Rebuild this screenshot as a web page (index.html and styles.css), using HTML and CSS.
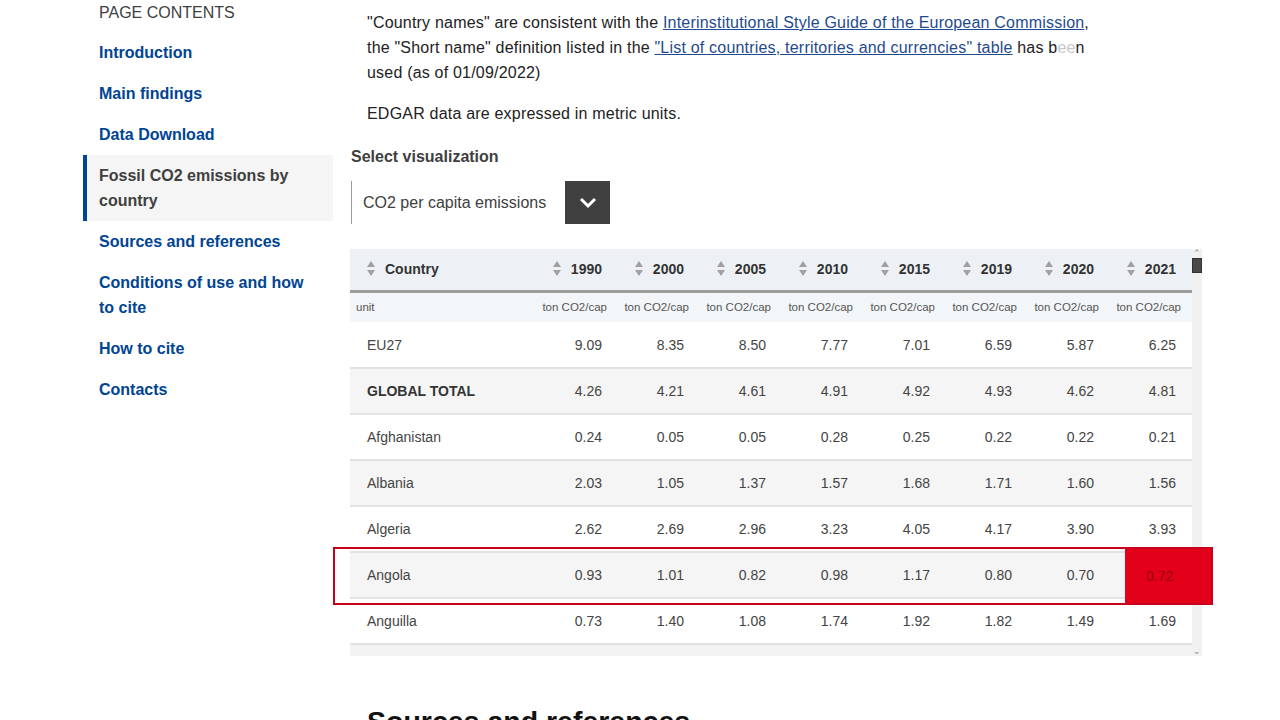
FILE: index.html
```html
<!DOCTYPE html>
<html lang="en">
<head>
    <meta charset="UTF-8">
    <meta name="viewport" content="width=device-width, initial-scale=1.0">
    <title>EDGAR - Fossil CO2 emissions by country</title>
    <link rel="stylesheet" href="styles.css">
</head>
<body>
    <div class="page">
        <nav class="sidebar">
            <div class="toc-title">PAGE CONTENTS</div>
            <ul class="toc">
                <li><a href="#">Introduction</a></li>
                <li><a href="#">Main findings</a></li>
                <li><a href="#">Data Download</a></li>
                <li class="active"><a href="#">Fossil CO2 emissions by country</a></li>
                <li><a href="#">Sources and references</a></li>
                <li><a href="#">Conditions of use and how to cite</a></li>
                <li><a href="#">How to cite</a></li>
                <li><a href="#">Contacts</a></li>
            </ul>
        </nav>

        <main class="content">
            <p class="text">"Country names" are consistent with the <a href="#">Interinstitutional Style Guide of the European Commission</a>, the "Short name" definition listed in the <a href="#">"List of countries, territories and currencies" table</a> has b<span class="faded">ee</span>n used (as of 01/09/2022)</p>
            <p class="text">EDGAR data are expressed in metric units.</p>

            <div class="select-label">Select visualization</div>
            <div class="select">
                <span class="select-value">CO2 per capita emissions</span>
                <span class="select-btn">
                    <svg width="18" height="12" viewBox="0 0 18 12"><path d="M2 2 L9 9 L16 2" fill="none" stroke="#fff" stroke-width="3"/></svg>
                </span>
            </div>

            <div class="table-wrap">
                <div class="table-area">
                    <table class="data-table">
                        <thead>
                            <tr class="head-row">
                                <th class="col-country"><span class="sort"></span>Country</th>
                                <th><span class="sort"></span>1990</th>
                                <th><span class="sort"></span>2000</th>
                                <th><span class="sort"></span>2005</th>
                                <th><span class="sort"></span>2010</th>
                                <th><span class="sort"></span>2015</th>
                                <th><span class="sort"></span>2019</th>
                                <th><span class="sort"></span>2020</th>
                                <th><span class="sort"></span>2021</th>
                            </tr>
                            <tr class="unit-row">
                                <td class="col-country">unit</td>
                                <td>ton CO2/cap</td>
                                <td>ton CO2/cap</td>
                                <td>ton CO2/cap</td>
                                <td>ton CO2/cap</td>
                                <td>ton CO2/cap</td>
                                <td>ton CO2/cap</td>
                                <td>ton CO2/cap</td>
                                <td>ton CO2/cap</td>
                            </tr>
                        </thead>
                        <tbody id="rows"></tbody>
                    </table>
                    <div class="table-foot"></div>
                    <div class="highlight">
                        <div class="highlight-cell">0.72</div>
                    </div>
                </div>
                <div class="scrollbar">
                    <span class="arrow">&#8963;</span>
                    <span class="thumb"></span>
                    <span class="spacer"></span>
                    <span class="arrow">&#8964;</span>
                </div>
            </div>

            <h2 class="section-title">Sources and references</h2>
        </main>
    </div>

    <script>
        const data = [
            ['EU27', ['9.09', '8.35', '8.50', '7.77', '7.01', '6.59', '5.87', '6.25']],
            ['GLOBAL TOTAL', ['4.26', '4.21', '4.61', '4.91', '4.92', '4.93', '4.62', '4.81']],
            ['Afghanistan', ['0.24', '0.05', '0.05', '0.28', '0.25', '0.22', '0.22', '0.21']],
            ['Albania', ['2.03', '1.05', '1.37', '1.57', '1.68', '1.71', '1.60', '1.56']],
            ['Algeria', ['2.62', '2.69', '2.96', '3.23', '4.05', '4.17', '3.90', '3.93']],
            ['Angola', ['0.93', '1.01', '0.82', '0.98', '1.17', '0.80', '0.70', '0.72']],
            ['Anguilla', ['0.73', '1.40', '1.08', '1.74', '1.92', '1.82', '1.49', '1.69']]
        ];

        const sortIcon = '<svg width="10" height="17" viewBox="0 0 10 17"><path d="M5 1 L9 7 L1 7 Z M1 10 L9 10 L5 16 Z" fill="#a0a0a0"/></svg>';
        document.querySelectorAll('.sort').forEach(el => {
            el.innerHTML = sortIcon;
        });

        const tbody = document.getElementById('rows');
        data.forEach(([country, values]) => {
            const tr = document.createElement('tr');
            if (country === 'GLOBAL TOTAL') tr.classList.add('total');
            let html = `<td class="col-country">${country}</td>`;
            values.forEach(v => {
                html += `<td>${v}</td>`;
            });
            tr.innerHTML = html;
            tbody.appendChild(tr);
        });
    </script>
</body>
</html>
```

FILE: styles.css
```css
* {
    margin: 0;
    padding: 0;
    box-sizing: border-box;
}

body {
    background: #fff;
    color: #333;
    font-family: 'Liberation Sans', Arial, sans-serif;
    font-size: 16px;
    overflow: hidden;
}

.page {
    display: flex;
    align-items: flex-start;
    padding-left: 83px;
}

/* sidebar */

.sidebar {
    width: 250px;
    flex-shrink: 0;
}

.toc-title {
    padding-left: 16px;
    line-height: 26px;
    color: #404040;
    margin-bottom: 6px;
}

.toc {
    list-style: none;
}

.toc li {
    border-left: 4px solid transparent;
    padding: 8px 12px;
    line-height: 25px;
}

.toc a {
    color: #004494;
    font-weight: bold;
    text-decoration: none;
}

.toc li.active {
    border-left-color: #004494;
    background: #f5f5f5;
}

.toc li.active a {
    color: #404040;
}

/* main column */

.content {
    margin-left: 17px;
    width: 862px;
    padding-top: 10px;
}

.text {
    margin-left: 17px;
    width: 728px;
    line-height: 25px;
    letter-spacing: 0.2px;
    color: #222;
    margin-bottom: 16px;
}

.text a {
    color: #1f4b8e;
    text-decoration: underline;
}

.faded {
    color: #c8c8c8;
}

.select-label {
    margin-top: 19px;
    font-weight: bold;
    color: #404040;
    line-height: 24px;
    margin-left: 1px;
    margin-bottom: 12px;
}

.select {
    display: flex;
    align-items: center;
    width: 259px;
    height: 43px;
    margin-left: 1px;
    border-left: 1px solid #9a9a9a;
}

.select-value {
    flex: 1;
    padding-left: 11px;
    color: #404040;
}

.select-btn {
    width: 45px;
    height: 43px;
    background: #404040;
    display: flex;
    align-items: center;
    justify-content: center;
}

/* table */

.table-wrap {
    display: flex;
    margin-top: 25px;
    width: 852px;
}

.table-area {
    position: relative;
    width: 842px;
}

.data-table {
    width: 842px;
    border-collapse: collapse;
    table-layout: fixed;
    font-size: 14px;
    color: #444;
}

.data-table th,
.data-table td {
    text-align: right;
    padding: 0 16px 0 0;
    white-space: nowrap;
}

.data-table .col-country {
    width: 186px;
    text-align: left;
    padding-left: 17px;
}

.head-row {
    background: #edf1f5;
    height: 42px;
    border-bottom: 3px solid #9c9c9c;
}

.head-row th {
    font-weight: bold;
    color: #333;
}

.sort {
    display: inline-block;
    vertical-align: middle;
    margin-right: 9px;
    margin-top: -3px;
}

.sort svg {
    display: block;
}

.head-row .col-country .sort {
    margin-left: -1px;
    margin-right: 9px;
}

.unit-row {
    background: #f3f6f9;
    height: 31px;
}

.unit-row td {
    font-size: 11.5px;
    color: #555;
    padding-right: 11px;
}

.unit-row .col-country {
    padding-left: 6px;
}

tbody tr {
    height: 46px;
    border-bottom: 2px solid #e2e2e2;
}

tbody tr:nth-child(even) {
    background: #f5f5f5;
}

tbody tr.total .col-country {
    font-weight: bold;
    color: #333;
}

.table-foot {
    height: 11px;
    background: #f3f3f3;
}

.highlight {
    position: absolute;
    left: -17px;
    top: 298px;
    width: 880px;
    height: 58px;
    border: 2px solid #c8001c;
}

.highlight-cell {
    position: absolute;
    right: 0;
    top: 0;
    bottom: 0;
    width: 86px;
    background: #e2001a;
    color: #9a0012;
    font-size: 14px;
    line-height: 54px;
    padding-left: 21px;
}

.scrollbar {
    width: 10px;
    background: #f1f1f1;
    display: flex;
    flex-direction: column;
    align-items: center;
    color: #888;
    font-size: 9px;
}

.scrollbar .arrow {
    line-height: 9px;
    height: 9px;
}

.thumb {
    width: 10px;
    height: 15px;
    background: #4a4a4a;
    border: 1px solid #333;
}

.spacer {
    flex: 1;
}

.section-title {
    margin-left: 17px;
    margin-top: 47px;
    font-size: 28.5px;
    line-height: 36px;
    color: #111;
}
```
